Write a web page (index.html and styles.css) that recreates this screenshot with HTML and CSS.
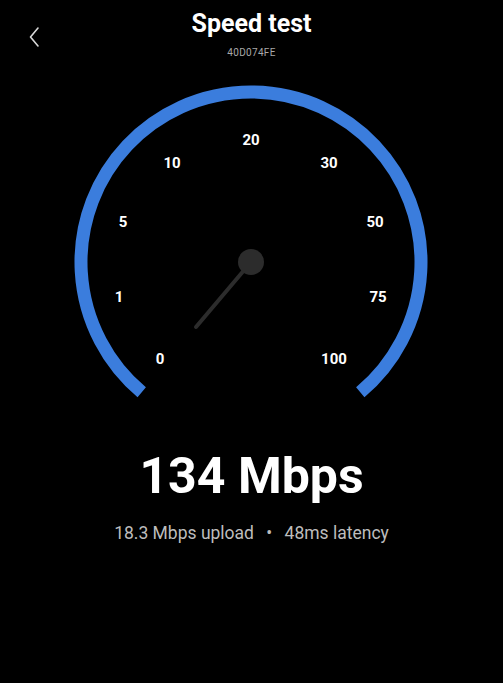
FILE: index.html
```html
<!DOCTYPE html>
<html lang="en">
<head>
    <meta charset="UTF-8">
    <meta name="viewport" content="width=device-width, initial-scale=1.0">
    <title>Speed test</title>
    <link rel="stylesheet" href="styles.css">
</head>
<body>
    <div class="screen">
        <header class="header">
            <button class="back" aria-label="Back">
                <svg width="12" height="22" viewBox="0 0 12 22">
                    <path d="M9 2 L1.5 11 L9 20" fill="none" stroke="#d8d8d8" stroke-width="1.6" stroke-linecap="round" stroke-linejoin="round"/>
                </svg>
            </button>
            <h1 class="title">Speed test</h1>
            <div class="device-id">40D074FE</div>
        </header>

        <svg class="gauge" width="503" height="340" viewBox="0 70 503 340">
            <!-- arc spans 280deg, open at the bottom -->
            <path class="gauge-arc" d="M141.73 392.23 A170 170 0 1 1 360.27 392.23"/>
            <g class="gauge-labels">
                <text x="160" y="359">0</text>
                <text x="119" y="297">1</text>
                <text x="123" y="222">5</text>
                <text x="172" y="163">10</text>
                <text x="251" y="140">20</text>
                <text x="329" y="163">30</text>
                <text x="375" y="222">50</text>
                <text x="378" y="297">75</text>
                <text x="334" y="359">100</text>
            </g>
            <line class="gauge-needle" x1="251" y1="262" x2="196" y2="327"/>
            <circle class="gauge-hub" cx="251" cy="262" r="13"/>
        </svg>

        <div class="speed">134 Mbps</div>
        <div class="details">18.3 Mbps upload <span class="dot">•</span> 48ms latency</div>
    </div>
</body>
</html>
```

FILE: styles.css
```css
body {
    margin: 0;
    background-color: #000;
    color: #fff;
    font-family: Roboto, "Liberation Sans", sans-serif;
}

.screen {
    width: 503px;
    height: 683px;
    display: flex;
    flex-direction: column;
    align-items: center;
}

.header {
    position: relative;
    width: 100%;
    height: 70px;
    text-align: center;
}

.back {
    position: absolute;
    left: 29px;
    top: 26px;
    padding: 0;
    border: none;
    background: none;
    line-height: 0;
    cursor: pointer;
}

.title {
    margin: 10px 0 0;
    font-size: 25px;
    line-height: 28px;
    font-weight: 700;
}

.device-id {
    margin-top: 8px;
    font-size: 10px;
    line-height: 14px;
    color: #a8a8a8;
    letter-spacing: 0.3px;
}

.gauge {
    display: block;
}

.gauge-arc {
    fill: none;
    stroke: #3b7ddd;
    stroke-width: 13;
}

.gauge-labels text {
    fill: #fff;
    font-size: 15px;
    font-weight: 700;
    text-anchor: middle;
    dominant-baseline: central;
}

.gauge-needle {
    stroke: #2c2c2c;
    stroke-width: 4;
    stroke-linecap: round;
}

.gauge-hub {
    fill: #2c2c2c;
}

.speed {
    margin-top: 36px;
    font-size: 50px;
    line-height: 60px;
    font-weight: 700;
}

.details {
    margin-top: 15px;
    font-size: 17.5px;
    line-height: 24px;
    color: #bdbdbd;
}

.dot {
    margin: 0 8px;
}
```
